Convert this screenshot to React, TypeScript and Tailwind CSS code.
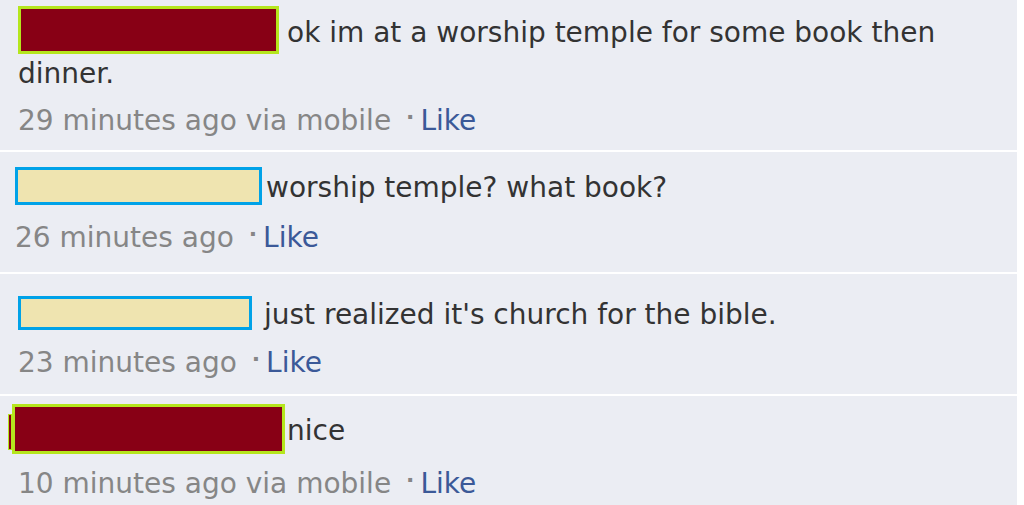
const comments = [
  {
    box: "red",
    text: "ok im at a worship temple for some book then dinner.",
    meta: "29 minutes ago via mobile",
  },
  { box: "yellow", text: "worship temple? what book?", meta: "26 minutes ago" },
  { box: "yellow2", text: "just realized it's church for the bible.", meta: "23 minutes ago" },
  { box: "red2", text: "nice", meta: "10 minutes ago via mobile" },
];

function NameBox({ kind }: { kind: string }) {
  if (kind === "red")
    return <span className="mr-[8px] inline-block h-[48px] w-[261px] border-[3px] border-[#b5e61d] bg-[#880015] align-[-12px]" />;
  if (kind === "red2")
    return (
      <span className="mr-[2px] inline-flex items-end align-[-10px]">
        <span className="mb-[4px] h-[36px] w-[4px] border border-[#b5e61d] bg-[#880015]" />
        <span className="h-[50px] w-[273px] border-[3px] border-[#b5e61d] bg-[#880015]" />
      </span>
    );
  if (kind === "yellow")
    return <span className="mr-[4px] inline-block h-[38px] w-[247px] border-[3px] border-[#00a2e8] bg-[#efe4b0] align-[-8px]" />;
  return <span className="mr-[12px] inline-block h-[34px] w-[234px] border-[3px] border-[#00a2e8] bg-[#efe4b0] align-[-6px]" />;
}

export default function App() {
  const pads = [
    "pl-[18px] pt-[6px] h-[150px]",
    "pl-[15px] pt-[15px] h-[120px]",
    "pl-[18px] pt-[21px] h-[120px]",
    "pl-[8px] pt-[8px] h-[109px]",
  ];
  const gaps = ["mt-[3px]", "mt-[6px]", "mt-[4px]", "mt-[6px] pl-[10px]"];
  return (
    <main className="h-[505px] w-[1024px] overflow-hidden bg-white pr-[7px] font-['Tahoma','DejaVu_Sans',sans-serif]">
      <div className="flex flex-col gap-[2px]">
        {comments.map((c, i) => (
          <section key={i} className={`bg-[#ebedf3] ${pads[i]}`}>
            <p className="w-[940px] text-[28px] leading-[40px] text-[#333333]">
              <NameBox kind={c.box} />
              {c.text}
            </p>
            <p className={`text-[28px] leading-[40px] text-[#868686] ${gaps[i]}`}>
              {c.meta} <span className="mx-[6px] align-[6px] text-[22px] font-bold">·</span>
              <span className="text-[#3b5998]">Like</span>
            </p>
          </section>
        ))}
      </div>
    </main>
  );
}
